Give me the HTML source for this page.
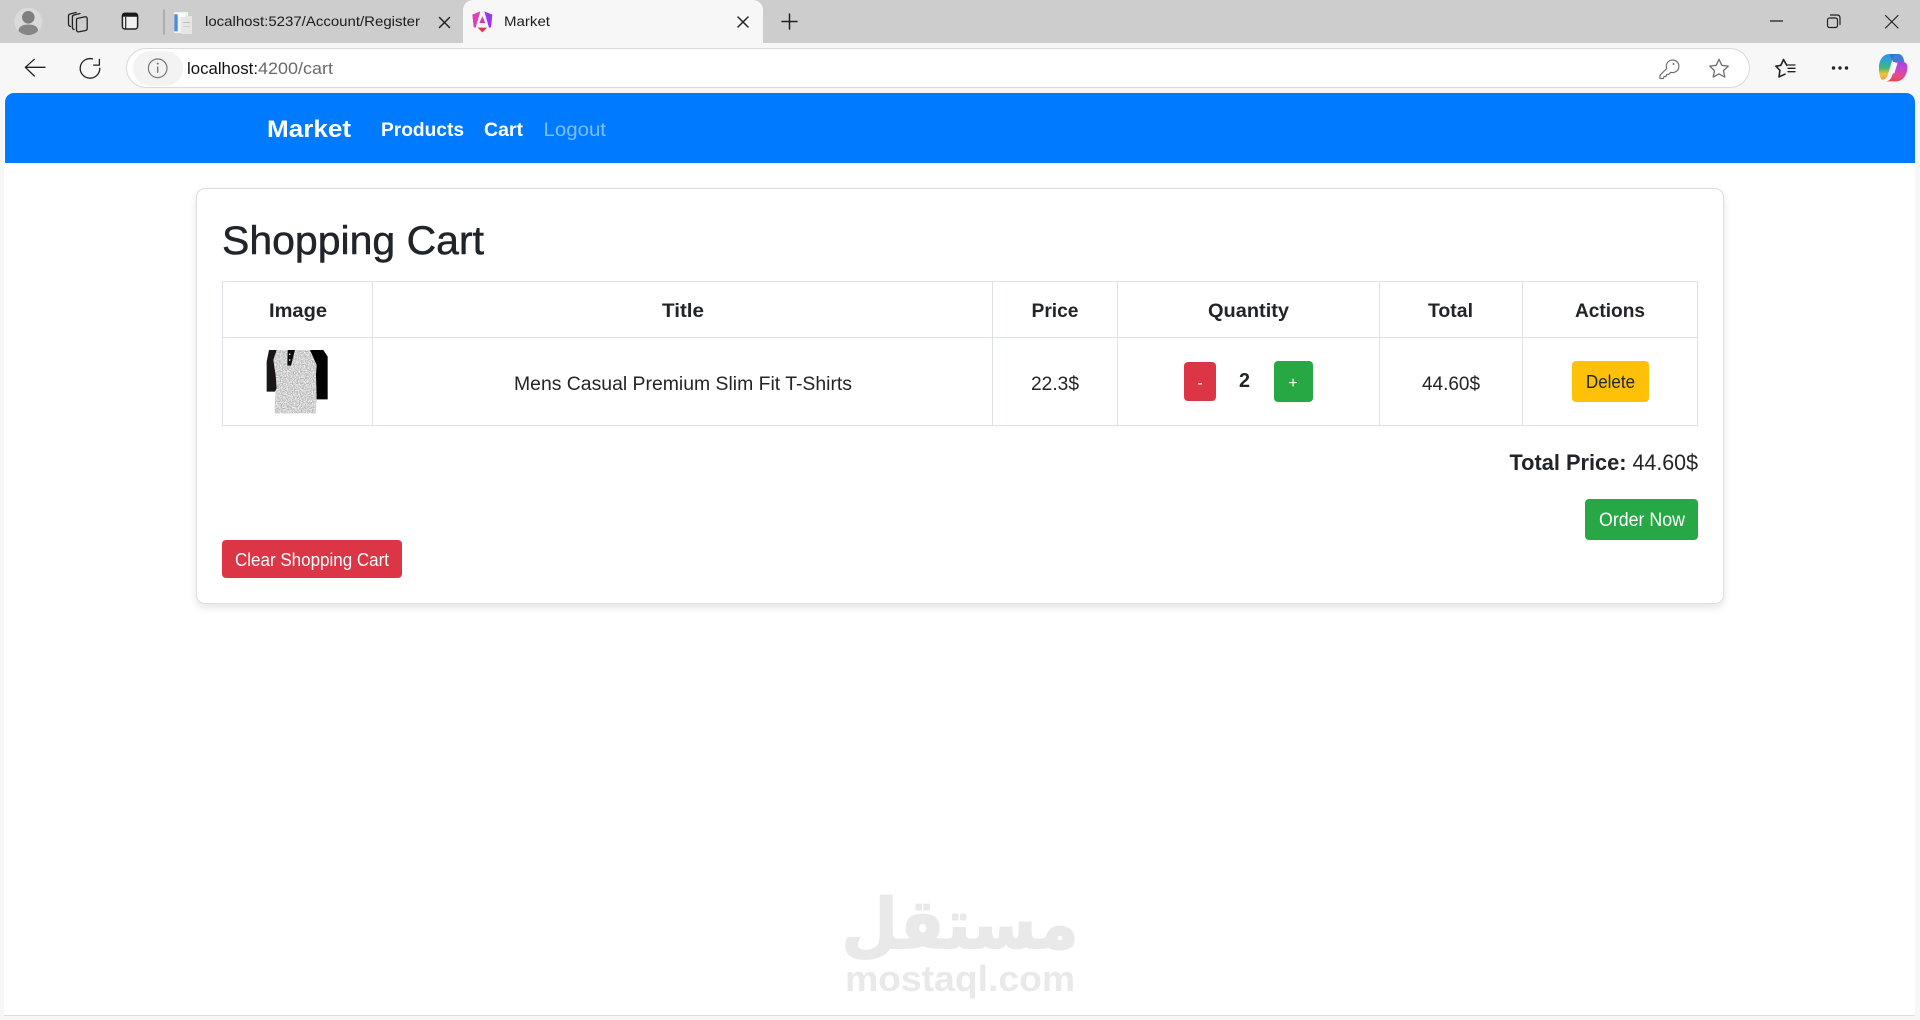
<!DOCTYPE html>
<html lang="en"><head><meta charset="utf-8"><title>Market</title>
<style>
html,body{margin:0;padding:0;width:1920px;height:1020px;overflow:hidden;background:#f7f7f7;font-family:"Liberation Sans",sans-serif}
.a{position:absolute;box-sizing:border-box}
#strip{left:0;top:0;width:1920px;height:43px;background:#cdcdcd}
#tab{left:463px;top:0;width:300px;height:43px;background:#f7f7f7;border-radius:10px 10px 0 0}
#addr{left:125.500px;top:48px;width:1624px;height:40px;background:#fff;border:1.5px solid #d9d9d9;border-radius:20px}
#pill{left:133px;top:51px;width:50px;height:35px;background:#f3f3f3;border-radius:18px}
#page{left:4px;top:93px;width:1911px;height:923px;background:#fff;border-radius:9px 9px 0 0;border-bottom:1.5px solid #dedede}
#nav{left:5px;top:93px;width:1910px;height:70px;background:#007bff;border-radius:9px 9px 0 0}
#card{left:196px;top:188px;width:1528px;height:416px;background:#fff;border:1px solid #dedede;border-radius:9px;box-shadow:0 4px 8px rgba(0,0,0,.1)}
#tbl{left:222px;top:281px;width:1476px;height:145px;border:1px solid #dee2e6}
.h{height:1px;background:#dee2e6}.v{width:1px;top:281px;height:145px;background:#dee2e6}
.b{border-radius:4px}
svg{position:absolute;left:0;top:0}
text{font-family:"Liberation Sans",sans-serif;fill:#212529}
.th{font-size:19px;font-weight:700}.td{font-size:19px}
.w{fill:#fff}
.ic{fill:none;stroke:#222;stroke-width:1.5;stroke-linecap:round;stroke-linejoin:round}
#ar{left:760px;top:880px;width:400px;height:90px;color:#e9e9e9;font:700 80px/90px "DejaVu Sans",sans-serif;-webkit-text-stroke:2px #e9e9e9;direction:rtl;text-align:center;white-space:nowrap;transform:scale(.81,.86);transform-origin:center}
</style></head><body>
<div class="a" id="strip"></div>
<div class="a" id="tab"></div>
<div class="a" id="addr"></div>
<div class="a" id="pill"></div>
<div class="a" id="page"></div>
<div class="a" id="nav"></div>
<div class="a" id="card"></div>
<div class="a" id="tbl"></div>
<div class="a h" style="left:222px;top:337px;width:1476px"></div>
<div class="a v" style="left:372px"></div>
<div class="a v" style="left:992px"></div>
<div class="a v" style="left:1117px"></div>
<div class="a v" style="left:1379px"></div>
<div class="a v" style="left:1522px"></div>
<div class="a b" style="left:1184px;top:362px;width:32px;height:39px;background:#dc3545"></div>
<div class="a b" style="left:1274px;top:361px;width:39px;height:41px;background:#28a745"></div>
<div class="a b" style="left:1572px;top:361px;width:77px;height:41px;background:#ffc107"></div>
<div class="a b" style="left:1585px;top:499px;width:113px;height:41px;background:#28a745"></div>
<div class="a b" style="left:222px;top:540px;width:180px;height:38px;background:#dc3545"></div>
<div class="a" id="ar">مستقل</div>
<svg width="1920" height="1020" viewBox="0 0 1920 1020">
<defs>
<clipPath id="pc"><circle cx="28.300" cy="21.700" r="13.500"/></clipPath>
<filter id="nz" x="0" y="0" width="100%" height="100%" color-interpolation-filters="sRGB"><feTurbulence type="fractalNoise" baseFrequency=".28" numOctaves="1" seed="4"/><feColorMatrix type="matrix" values=".7 0 0 0 .47  .7 0 0 0 .47  .7 0 0 0 .47  0 0 0 0 1"/><feComposite in2="SourceAlpha" operator="in"/></filter>
<linearGradient id="cl" x1="0" y1="0" x2="0" y2="1"><stop offset="0" stop-color="#2f8fe8"/><stop offset=".3" stop-color="#30a8c8"/><stop offset=".55" stop-color="#47b86a"/><stop offset=".78" stop-color="#f2c53a"/><stop offset="1" stop-color="#f0984a"/></linearGradient>
<linearGradient id="cr" x1="0" y1="0" x2="0" y2="1"><stop offset="0" stop-color="#9a48e8"/><stop offset=".45" stop-color="#d045c0"/><stop offset=".8" stop-color="#ec4a78"/><stop offset="1" stop-color="#e8404a"/></linearGradient>
</defs>
<!-- browser chrome icons -->
<circle cx="28.300" cy="21.700" r="14" fill="#dadada"/>
<g clip-path="url(#pc)"><circle cx="28.300" cy="17.300" r="6.300" fill="#7f7f7f"/><path d="M18.500 36v-5c0-4.500 4-6.500 9.800-6.500s9.800 2 9.800 6.500v5z" fill="#868686"/></g>
<g class="ic" style="stroke-width:1.300"><path d="M77 18.500l8-1.700c1.300-.2 2.200.6 2.200 2v9.700c0 1.100-.6 1.800-1.600 2l-6.400 1.300c-1.600.3-2.700-.5-2.700-2v-9.500c0-1 .4-1.600.5-1.800z"/><path d="M74 29.500c-1-.3-1.600-1-1.600-2.300V17c0-1 .6-1.800 1.600-2l6-1.500"/><path d="M70.500 26.500c-1.300-.3-2-1.100-2-2.500v-8c0-1 .6-1.800 1.600-2l6-1.500"/></g>
<rect x="122.400" y="13.400" width="15.200" height="15.600" rx="2.500" fill="#f1f1f1" stroke="#222" stroke-width="1.500"/><path d="M122 16.800v-1.300c0-1.700 1-2.800 2.800-2.800h10.400c1.800 0 2.800 1.100 2.800 2.800v1.300z" fill="#1a1a1a"/><path d="M125.700 17v12" stroke="#222" stroke-width="1.200"/>
<path d="M164 9.500v25" stroke="#8d8d8d" stroke-width="1"/>
<rect x="174" y="12" width="14" height="21" fill="#f2f2f2"/><rect x="181" y="16" width="11" height="18" fill="#e6e6e6"/><rect x="176" y="13" width="9" height="4" fill="#fff"/><rect x="174.300" y="14.300" width="3.400" height="17" fill="#4a8ae0"/><rect x="183" y="22" width="7" height="1" fill="#bdbdbd"/><rect x="183" y="26" width="7" height="1" fill="#cfcfcf"/>
<path d="M439.500 17.500l10 10M449.500 17.500l-10 10" class="ic"/>
<g transform="translate(465 5) scale(.33333)">
<path d="M46 19L22 29l4 38 6 1z" fill="#e23cbc"/>
<path d="M58 19l24 10-4 38-6 1z" fill="#9a34f0"/>
<path d="M52 34l9 20H43z" fill="#d63aa8"/>
<path d="M38 68h28L52 82z" fill="#e8304a"/>
</g>
<path d="M738 17l10 10M748 17l-10 10" class="ic"/>
<path d="M789.500 14v15M782 21.500h15" class="ic"/>
<path d="M1770 21h13" stroke="#222" stroke-width="1.300"/>
<g class="ic" style="stroke-width:1.200"><rect x="1827.500" y="18" width="10" height="9.500" rx="2"/><path d="M1830.500 15h6.500c2 0 3 1 3 3v6.500"/><path d="M1885.500 15.500l12.500 12.500M1898 15.500l-12.500 12.500"/></g>
<path d="M45 67.300H25.500M34.300 59.300l-9 8 9 8.700" class="ic" style="stroke-width:1.300"/>
<path d="M92.500 58.900A9.800 9.800 0 1 0 99.800 68.300" class="ic" style="stroke-width:1.300"/><path d="M99.400 59.400v5.700h-5.800" class="ic" style="stroke-width:1.300"/>
<circle cx="157.700" cy="68.300" r="9.300" fill="none" stroke="#777" stroke-width="1.200"/><path d="M157.700 66.500v6.300" stroke="#777" stroke-width="1.400"/><circle cx="157.700" cy="63.600" r="1" fill="#777"/>
<g transform="translate(-2 0)"><path d="M1668.700 68.500a6.300 6.300 0 1 1 4 3.800l-2.200 2.200h-2l-.5 2h-2l-.6 2h-3.400v-3.300z" fill="none" stroke="#707070" stroke-width="1.200" stroke-linejoin="round"/><circle cx="1675.500" cy="64" r="1" fill="#707070"/></g>
<path d="M1719 59.300l2.800 6 6.500.8-4.800 4.500 1.300 6.500-5.800-3.200-5.800 3.200 1.300-6.500-4.800-4.500 6.500-.8z" fill="none" stroke="#707070" stroke-width="1.300" stroke-linejoin="round"/>
<path d="M1786.800 65.300l-3.300-5.800-2.600 5.800-5 .9 4 4.100-.9 6.600 6-2.700" class="ic" style="stroke-width:1.600"/><path d="M1788 65h7M1788 68.300h7M1788 71.700h7" class="ic" style="stroke-width:1.300"/>
<g fill="#222"><circle cx="1833.500" cy="68" r="1.700"/><circle cx="1840" cy="68" r="1.700"/><circle cx="1846.500" cy="68" r="1.700"/></g>
<g transform="translate(1869 48) scale(.33333)">
<path d="M30 58C30 36 42 18 62 18h24c-12 2-14 10-18 24L58 76c-4 14-9 19-20 19-6-10-9-24-8-37z" fill="url(#cl)"/>
<path d="M62 18h26c10 0 16 10 18 24H74c-4 0-6-12-12-24z" fill="#2b6fd0" opacity=".9"/>
<path d="M76 42h26c10 0 15 9 13 22-3 20-15 36-35 36H50c12 0 17-9 21-22l10-30c-1-4-3-6-5-6z" fill="url(#cr)"/>
<path d="M72 44h14L76 76H61z" fill="#f7f7f7"/>
</g>
<!-- tabs & address text -->
<text x="205" y="26" font-size="14" textLength="215" lengthAdjust="spacingAndGlyphs" style="fill:#1c1c1c">localhost:5237/Account/Register</text>
<text x="504" y="26" font-size="14" textLength="46" lengthAdjust="spacingAndGlyphs" style="fill:#1c1c1c">Market</text>
<text x="187" y="74" font-size="17" textLength="71" lengthAdjust="spacingAndGlyphs" style="fill:#111">localhost:</text>
<text x="258" y="74" font-size="17" textLength="75" lengthAdjust="spacingAndGlyphs" style="fill:#6a6a6a">4200/cart</text>
<!-- nav -->
<text x="267" y="137" class="w" font-size="24" font-weight="700" textLength="84" lengthAdjust="spacingAndGlyphs">Market</text>
<text x="381" y="136" class="w" font-size="19" font-weight="700" textLength="83" lengthAdjust="spacingAndGlyphs">Products</text>
<text x="484" y="136" class="w" font-size="19" font-weight="700" textLength="39" lengthAdjust="spacingAndGlyphs">Cart</text>
<text x="543.500" y="136" font-size="19" textLength="62.500" lengthAdjust="spacingAndGlyphs" style="fill:#80bdff">Logout</text>
<!-- content -->
<text x="222" y="254" font-size="40" textLength="262" lengthAdjust="spacingAndGlyphs" stroke="#212529" stroke-width=".5">Shopping Cart</text>
<text x="269" y="317" class="th" textLength="58" lengthAdjust="spacingAndGlyphs">Image</text>
<text x="662" y="317" class="th" textLength="42" lengthAdjust="spacingAndGlyphs">Title</text>
<text x="1031.500" y="317" class="th" textLength="47" lengthAdjust="spacingAndGlyphs">Price</text>
<text x="1208" y="317" class="th" textLength="81" lengthAdjust="spacingAndGlyphs">Quantity</text>
<text x="1428" y="317" class="th" textLength="45" lengthAdjust="spacingAndGlyphs">Total</text>
<text x="1575" y="317" class="th" textLength="70" lengthAdjust="spacingAndGlyphs">Actions</text>
<text x="514" y="390" class="td" textLength="338" lengthAdjust="spacingAndGlyphs">Mens Casual Premium Slim Fit T-Shirts</text>
<text x="1031" y="390" class="td" textLength="48" lengthAdjust="spacingAndGlyphs">22.3$</text>
<text x="1422" y="390" class="td" textLength="58" lengthAdjust="spacingAndGlyphs">44.60$</text>
<text x="1239" y="387" font-size="20" font-weight="700" textLength="11" lengthAdjust="spacingAndGlyphs">2</text>
<text x="1200" y="388" class="w" font-size="16" text-anchor="middle">-</text>
<text x="1293" y="388" class="w" font-size="16" text-anchor="middle">+</text>
<text x="1586" y="388" font-size="18" textLength="49" lengthAdjust="spacingAndGlyphs">Delete</text>
<text x="1509.500" y="470" font-size="22" font-weight="700" textLength="117" lengthAdjust="spacingAndGlyphs">Total Price:</text>
<text x="1632.500" y="470" font-size="22" textLength="65.500" lengthAdjust="spacingAndGlyphs">44.60$</text>
<text x="1599" y="526" class="w" font-size="19" textLength="86" lengthAdjust="spacingAndGlyphs">Order Now</text>
<text x="235" y="566" class="w" font-size="18" textLength="154" lengthAdjust="spacingAndGlyphs">Clear Shopping Cart</text>
<!-- shirt -->
<g transform="translate(255 345) scale(.33333)">
<path d="M65 15H165l20 45-2 30 2 73-3 42H58l4-65 3-10-3-45-7-40z" filter="url(#nz)"/>
<path d="M42 15h23L55 45l7 45 3 40-5 10H35V50z" fill="#1a1516"/>
<path d="M165 15h40l13 20v128h-33l-2-73 2-30z" fill="#020202"/>
<path d="M98 15h22l-12 47H97z" fill="#0c0c0c"/>
<circle cx="104" cy="28" r="2.500" fill="#ddd"/><circle cx="104" cy="45" r="2.500" fill="#ddd"/>
</g>
<!-- watermark -->
<text x="845" y="991" font-size="36" font-weight="700" textLength="230" lengthAdjust="spacingAndGlyphs" style="fill:#e9e9e9">mostaql.com</text>
</svg>
</body></html>
